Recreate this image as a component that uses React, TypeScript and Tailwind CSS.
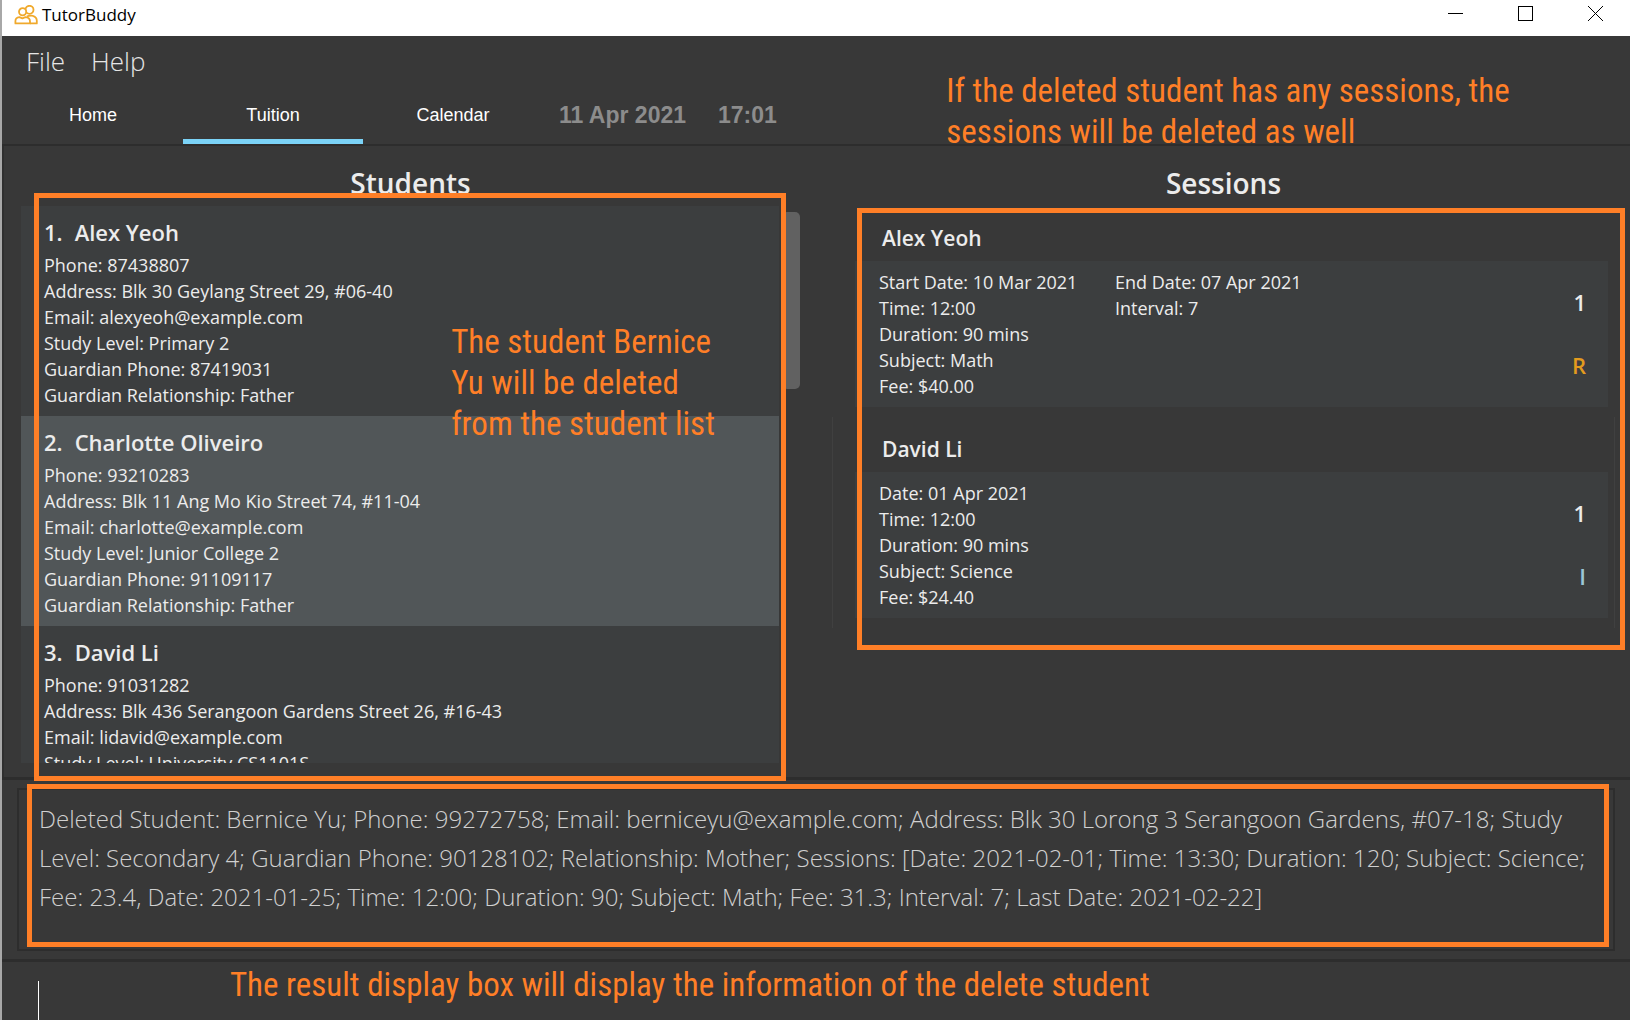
import React from "react";

type Student = { name: string; details: string[] };

const students: Student[] = [
  {
    name: "Alex Yeoh",
    details: [
      "Phone: 87438807",
      "Address: Blk 30 Geylang Street 29, #06-40",
      "Email: alexyeoh@example.com",
      "Study Level: Primary 2",
      "Guardian Phone: 87419031",
      "Guardian Relationship: Father",
    ],
  },
  {
    name: "Charlotte Oliveiro",
    details: [
      "Phone: 93210283",
      "Address: Blk 11 Ang Mo Kio Street 74, #11-04",
      "Email: charlotte@example.com",
      "Study Level: Junior College 2",
      "Guardian Phone: 91109117",
      "Guardian Relationship: Father",
    ],
  },
  {
    name: "David Li",
    details: [
      "Phone: 91031282",
      "Address: Blk 436 Serangoon Gardens Street 26, #16-43",
      "Email: lidavid@example.com",
      "Study Level: University CS1101S",
    ],
  },
];

type Session = {
  name: string;
  left: string[];
  right: string[];
  index: number;
  kind: "R" | "I";
};

const sessions: Session[] = [
  {
    name: "Alex Yeoh",
    left: ["Start Date: 10 Mar 2021", "Time: 12:00", "Duration: 90 mins", "Subject: Math", "Fee: $40.00"],
    right: ["End Date: 07 Apr 2021", "Interval: 7"],
    index: 1,
    kind: "R",
  },
  {
    name: "David Li",
    left: ["Date: 01 Apr 2021", "Time: 12:00", "Duration: 90 mins", "Subject: Science", "Fee: $24.40"],
    right: [],
    index: 1,
    kind: "I",
  },
];

const resultText =
  "Deleted Student: Bernice Yu; Phone: 99272758; Email: berniceyu@example.com; Address: Blk 30 Lorong 3 Serangoon Gardens, #07-18; Study Level: Secondary 4; Guardian Phone: 90128102; Relationship: Mother; Sessions: [Date: 2021-02-01; Time: 13:30; Duration: 120; Subject: Science; Fee: 23.4, Date: 2021-01-25; Time: 12:00; Duration: 90; Subject: Math; Fee: 31.3; Interval: 7; Last Date: 2021-02-22]";

const Highlight = ({ className }: { className: string }) => (
  <div className={`pointer-events-none absolute z-10 border-[5px] border-[#ff7f27] ${className}`} />
);

const Note = ({ className, children }: { className: string; children: React.ReactNode }) => (
  <p
    className={`pointer-events-none absolute z-10 font-['Roboto_Condensed','Roboto',sans-serif] text-[33px] leading-[41px] whitespace-nowrap text-[#ff7f27] ${className}`}
  >
    {children}
  </p>
);

function TitleBar() {
  return (
    <header className="flex h-9 shrink-0 items-start bg-white text-black">
      <div className="flex h-[29px] flex-1 items-center gap-1 pl-3">
        <svg viewBox="0 0 24 20" className="h-5 w-6" fill="none" stroke="#f0a92c" strokeWidth="1.8" strokeLinejoin="round">
          <circle cx="15.5" cy="4.800" r="4" />
          <circle cx="8.600" cy="6.800" r="3.600" fill="#fff" />
          <path d="M16 18.400h6.800v-2.600c0-2.600-1.300-4.200-3.800-5" />
          <path d="M1.400 18.400v-2.200c0-2.400 1.600-3.800 4-4l3 1.200 3-1.200c2.800.2 4.600 1.800 4.600 4.200v2z" />
          <path d="M12.800 11.600c1.400-.8 3.800-1 6.200-.8" />
        </svg>
        <h1 className="text-[17px]">TutorBuddy</h1>
      </div>
      <button aria-label="Minimize" className="flex h-[27px] w-[70px] items-center justify-center">
        <svg viewBox="0 0 15 15" className="size-[15px]" stroke="#000" shapeRendering="crispEdges">
          <path d="M0 7.500h15" />
        </svg>
      </button>
      <button aria-label="Maximize" className="flex h-[27px] w-[70px] items-center justify-center">
        <svg viewBox="0 0 15 15" className="size-[15px]" stroke="#000" fill="none" shapeRendering="crispEdges">
          <path d="M.5.5h14v14H.5z" />
        </svg>
      </button>
      <button aria-label="Close" className="flex h-[27px] w-[70px] items-center justify-center">
        <svg viewBox="0 0 15 15" className="size-[15px]" stroke="#000">
          <path d="M0 0l15 15M15 0L0 15" />
        </svg>
      </button>
    </header>
  );
}

function TopBar() {
  return (
    <div className="relative shrink-0 border-b-2 border-[#2d2d2d]">
      <nav className="flex h-[52px] items-center gap-[26px] pb-0.5 pl-6 text-[26px] font-light text-[#e6e6e6]">
        <button>File</button>
        <button>Help</button>
      </nav>
      <div className="flex h-14 items-stretch pl-px font-['Liberation_Sans',sans-serif]">
        <div role="tablist" className="flex text-[18px] text-white">
          <button role="tab" aria-selected="false" className="w-[180px] border-b-[5px] border-transparent pt-1">
            Home
          </button>
          <button role="tab" aria-selected="true" className="w-[180px] border-b-[5px] border-[#7bd3f7] pt-1">
            Tuition
          </button>
          <button role="tab" aria-selected="false" className="w-[180px] border-b-[5px] border-transparent pt-1">
            Calendar
          </button>
        </div>
        <div className="flex items-center gap-8 pb-0.5 pl-4 text-[23px] font-bold text-[#8c8c8c]">
          <span>11 Apr 2021</span>
          <time>17:01</time>
        </div>
      </div>
      <Note className="top-[34px] left-[58%]">
        If the deleted student has any sessions, the
        <br />
        sessions will be deleted as well
      </Note>
    </div>
  );
}

function StudentCard({ student, index }: { student: Student; index: number }) {
  return (
    <li className={`px-[23px] py-2 ${index % 2 ? "bg-[#515658]" : "bg-[#3c3e3f]"}`}>
      <h3 className="mb-0.5 flex gap-3 text-[22px] leading-9 font-semibold">
        <span>{index + 1}.</span>
        <span>{student.name}</span>
      </h3>
      {student.details.map((line) => (
        <p key={line} className="text-[18px] leading-[26px] whitespace-nowrap">
          {line}
        </p>
      ))}
    </li>
  );
}

function SessionCard({ session }: { session: Session }) {
  return (
    <li className="border-x border-transparent pt-2 pr-1.5 pb-2.5 pl-[22px] even:border-[#404040]">
      <h3 className="pt-0.5 pl-[27px] text-[21px] leading-[45px] font-semibold">{session.name}</h3>
      <div className="flex bg-[#3c3e3f] py-2 pr-[22px] pl-6 text-[18px] leading-[26px]">
        <div className="w-[236px]">
          {session.left.map((line) => (
            <p key={line}>{line}</p>
          ))}
        </div>
        <div className="flex-1">
          {session.right.map((line) => (
            <p key={line}>{line}</p>
          ))}
        </div>
        <div className="flex flex-col items-end gap-[37px] pt-5 text-[22px] font-semibold">
          <span>{session.index}</span>
          <span className={session.kind === "R" ? "text-[#e39b1e]" : "text-[#9cc6d6]"}>{session.kind}</span>
        </div>
      </div>
    </li>
  );
}

export default function App() {
  return (
    <div className="flex h-screen flex-col overflow-hidden border-l-2 border-[#a8a8a8] bg-[#383838] font-['Open_Sans','Noto_Sans',sans-serif] text-[#ececec]">
      <TitleBar />
      <TopBar />

      <main className="grid min-h-0 flex-1 grid-cols-2 border-l-2 border-[#2f2f2f]">
        <section className="relative flex min-h-0 flex-col pr-[17px] pb-3.5 pl-[17px]">
          <h2 className="flex h-[60px] shrink-0 items-center justify-center pt-3.5 text-[28px] font-semibold">
            Students
          </h2>
          <div className="flex min-h-0 flex-1">
            <ul className="min-w-0 flex-1 overflow-hidden">
              {students.map((s, i) => (
                <StudentCard key={s.name} student={s} index={i} />
              ))}
            </ul>
            <div className="w-[21px] pt-1.5 pl-[3px]">
              <div className="h-[177px] rounded-[5px] bg-[#616161]" />
            </div>
          </div>
          <Highlight className="top-[47px] right-[31px] -bottom-1 left-[30px]" />
          <Note className="top-[175px] left-[55%]">
            The student Bernice
            <br />
            Yu will be deleted
            <br />
            from the student list
          </Note>
        </section>

        <section className="relative min-h-0 pr-[15px] pl-[15px]">
          <h2 className="flex h-[60px] items-center justify-center pt-3.5 text-[28px] font-semibold">Sessions</h2>
          <ul>
            {sessions.map((s) => (
              <SessionCard key={s.name} session={s} />
            ))}
          </ul>
          <Highlight className="top-[62px] right-[5px] left-10 h-[442px]" />
        </section>
      </main>

      <div className="shrink-0 border-y-[3px] border-[#2d2d2d] px-[15px] py-2">
        <div className="relative border-2 border-[#2d2d2d]">
          <textarea
            readOnly
            aria-label="Result display"
            value={resultText}
            className="block h-[159px] w-full resize-none overflow-hidden bg-transparent pt-[9px] pr-6 pl-5 text-[24px] leading-[39px] font-light text-[#d0d0d0] outline-none"
          />
          <Highlight className="-top-[6px] right-1 bottom-[2px] left-2" />
        </div>
      </div>

      <div className="relative flex h-[58px] shrink-0 items-end pl-9">
        <span className="h-[39px] w-px bg-white" />
        <input aria-label="Command" className="h-[39px] min-w-0 flex-1 bg-transparent text-[24px] outline-none" />
        <Note className="top-0.5 left-[14%]">The result display box will display the information of the delete student</Note>
      </div>
    </div>
  );
}
